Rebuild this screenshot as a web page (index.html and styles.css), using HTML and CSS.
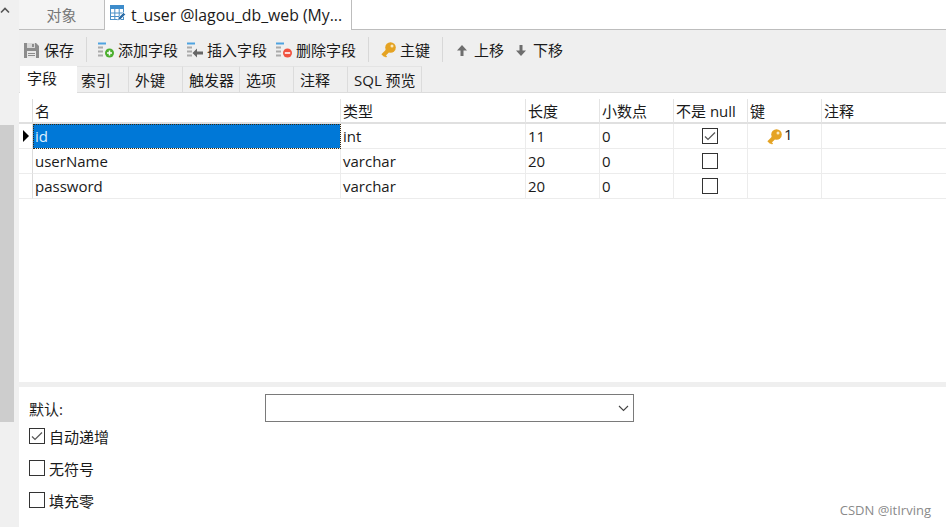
FILE: index.html
```html
<!DOCTYPE html>
<html lang="zh">
<head>
<meta charset="utf-8">
<title>t_user</title>
<link rel="stylesheet" href="styles.css">
</head>
<body>
<div class="app">
  <aside class="side">
    <svg class="chev" width="10" height="7" viewBox="0 0 10 7"><path d="M1 5.500 5 1.500 9 5.500" fill="none" stroke="#555" stroke-width="1.6"/></svg>
    <div class="thumb"></div>
  </aside>
  <main class="main">
    <nav class="tabbar">
      <div class="tab tab-idle">对象</div>
      <div class="tab tab-active">
        <svg class="tab-icon" width="16" height="17" viewBox="0 0 16 17">
          <rect x="0.5" y="0.5" width="13" height="14" fill="#fff" stroke="#4a90c8"/>
          <rect x="0" y="0" width="14" height="4" fill="#3d8ccb"/>
          <path d="M0.5 8h13M0.5 11.500h13M4.800 4v11M9.200 4v11" stroke="#4a90c8" fill="none"/>
          <path d="M7.500 15.500l1-3 5-5 2 2-5 5z" fill="#2f6fa8" stroke="#fff" stroke-width=".6"/>
        </svg>
        <span>t_user @lagou_db_web (My...</span>
      </div>
      <div class="tab-rest"></div>
    </nav>

    <div class="toolbar">
      <div class="tool tool-save">
        <svg width="15" height="15" viewBox="0 0 15 15"><path d="M0 0h12l3 3v12H0z" fill="#8c8c8c"/><rect x="3" y="0" width="8" height="5" fill="#d8d8d8"/><rect x="8" y="1" width="2" height="3" fill="#8c8c8c"/><rect x="3" y="8" width="9" height="7" fill="#e8e8e8"/><path d="M4 10.500h7M4 12.500h7" stroke="#8c8c8c"/></svg>
        <span>保存</span>
      </div>
      <i class="sep sep-a"></i>
      <div class="tool tool-add">
        <svg width="16" height="16" viewBox="0 0 16 16"><path d="M0 1.500h8" stroke="#4ea3e0" stroke-width="2"/><path d="M0 5.500h5M0 9.500h5M0 13.500h5" stroke="#aaa" stroke-width="2"/><circle cx="11.500" cy="11" r="4.500" fill="#4caf2f"/><path d="M9 11h5M11.500 8.500v5" stroke="#fff" stroke-width="1.500"/></svg>
        <span>添加字段</span>
      </div>
      <div class="tool tool-ins">
        <svg width="16" height="16" viewBox="0 0 16 16"><path d="M0 1.500h8" stroke="#4ea3e0" stroke-width="2"/><path d="M0 5.500h5M0 9.500h5M0 13.500h5" stroke="#aaa" stroke-width="2"/><path d="M16 9.500h-6v-3l-4.500 4.500 4.500 4.500v-3h6z" fill="#666"/></svg>
        <span>插入字段</span>
      </div>
      <div class="tool tool-del">
        <svg width="16" height="16" viewBox="0 0 16 16"><path d="M0 1.500h8" stroke="#4ea3e0" stroke-width="2"/><path d="M0 5.500h5M0 9.500h5M0 13.500h5" stroke="#aaa" stroke-width="2"/><circle cx="11.500" cy="11" r="4.500" fill="#f0523f"/><path d="M8.800 11h5.400" stroke="#fff" stroke-width="1.600"/></svg>
        <span>删除字段</span>
      </div>
      <i class="sep sep-b"></i>
      <div class="tool tool-key">
        <svg width="15" height="16" viewBox="0 0 15 16"><path d="M6.500 9 1.800 13.700" stroke="#e5a323" stroke-width="4" fill="none"/><path d="M3.500 13l2 2" stroke="#e5a323" stroke-width="1.600"/><circle cx="9.500" cy="5.500" r="5.300" fill="#e5a323"/><circle cx="11" cy="4" r="1.500" fill="#fbe9bd"/></svg>
        <span>主键</span>
      </div>
      <i class="sep sep-c"></i>
      <div class="tool tool-up">
        <svg width="10" height="11" viewBox="0 0 10 11"><path d="M5 0 10 5.500H6.500V11h-3V5.500H0z" fill="#6e6e6e"/></svg>
        <span>上移</span>
      </div>
      <div class="tool tool-down">
        <svg width="10" height="11" viewBox="0 0 10 11"><path d="M5 11 10 5.500H6.500V0h-3V5.500H0z" fill="#6e6e6e"/></svg>
        <span>下移</span>
      </div>
    </div>

    <div class="subtabs">
      <div class="sub sub-on s1">字段</div>
      <div class="sub s2">索引</div>
      <div class="sub s3">外键</div>
      <div class="sub s4">触发器</div>
      <div class="sub s5">选项</div>
      <div class="sub s6">注释</div>
      <div class="sub s7">SQL 预览</div>
    </div>

    <section class="grid-area">
      <div class="grid">
        <div class="c head mark"></div>
        <div class="c head">名</div>
        <div class="c head">类型</div>
        <div class="c head">长度</div>
        <div class="c head">小数点</div>
        <div class="c head">不是 null</div>
        <div class="c head">键</div>
        <div class="c head">注释</div>

        <div class="c mark"><span class="arrow"></span></div>
        <div class="c selected">id</div>
        <div class="c">int</div>
        <div class="c">11</div>
        <div class="c">0</div>
        <div class="c center"><span class="check checked"><svg width="12" height="10" viewBox="0 0 12 10"><path d="M1 5.500 4 8.500 11 1.500" fill="none" stroke="#555" stroke-width="1.200"/></svg></span></div>
        <div class="c keycell">
          <svg width="15" height="16" viewBox="0 0 15 16"><path d="M6.500 9 1.800 13.700" stroke="#e5a323" stroke-width="4" fill="none"/><path d="M3.500 13l2 2" stroke="#e5a323" stroke-width="1.600"/><circle cx="9.500" cy="5.500" r="5.300" fill="#e5a323"/><circle cx="11" cy="4" r="1.500" fill="#fbe9bd"/></svg>
          <span class="keynum">1</span>
        </div>
        <div class="c"></div>

        <div class="c mark"></div>
        <div class="c">userName</div>
        <div class="c">varchar</div>
        <div class="c">20</div>
        <div class="c">0</div>
        <div class="c center"><span class="check"></span></div>
        <div class="c"></div>
        <div class="c"></div>

        <div class="c mark"></div>
        <div class="c">password</div>
        <div class="c">varchar</div>
        <div class="c">20</div>
        <div class="c">0</div>
        <div class="c center"><span class="check"></span></div>
        <div class="c"></div>
        <div class="c"></div>
      </div>
    </section>

    <section class="props">
      <div class="default-row">
        <label class="default-label">默认:</label>
        <div class="select"><svg width="11" height="7" viewBox="0 0 11 7"><path d="M1 1 5.500 5.500 10 1" fill="none" stroke="#444" stroke-width="1.100"/></svg></div>
      </div>
      <div class="opt"><span class="check checked"><svg width="12" height="10" viewBox="0 0 12 10"><path d="M1 5.500 4 8.500 11 1.500" fill="none" stroke="#555" stroke-width="1.200"/></svg></span>自动递增</div>
      <div class="opt"><span class="check"></span>无符号</div>
      <div class="opt"><span class="check"></span>填充零</div>
    </section>
  </main>
  <div class="watermark">CSDN @itIrving</div>
</div>
</body>
</html>
```
FILE: styles.css
```css
* { box-sizing: border-box; }
html, body { margin: 0; padding: 0; height: 100%; background: #fff; }
body {
  font-family: "Open Sans", "Noto Sans CJK SC", sans-serif;
  font-size: 15px;
  color: #1a1a1a;
  overflow: hidden;
}
.app { position: relative; display: flex; width: 946px; height: 527px; }

.side { position: relative; width: 19px; flex: none; background: #f0f0f0; }
.chev { position: absolute; left: 0; top: 7px; }
.thumb { position: absolute; left: 0; top: 125px; width: 14px; height: 297px; background: #cdcdcd; }

.main { flex: 1; display: flex; flex-direction: column; min-width: 0; }

.tabbar { display: flex; height: 30px; flex: none; }
.tab { height: 30px; display: flex; align-items: center; }
.tab-idle {
  width: 86px;
  justify-content: center;
  background: #f4f4f4;
  color: #777;
  border-right: 1px solid #bdbdbd;
  border-bottom: 1px solid #bdbdbd;
}
.tab-active { width: 247px; background: #fff; border-right: 1px solid #bdbdbd; padding-left: 5px; gap: 5px; font-size: 15.800px; }
.tab-icon { flex: none; margin-top: -4px; }
.tab-rest { flex: 1; border-bottom: 1px solid #bdbdbd; }

.toolbar { display: flex; align-items: center; height: 36px; flex: none; background: #efefef; padding-left: 5px; }
.tool { display: flex; align-items: center; gap: 4px; height: 30px; flex: none; margin-top: 4px; }
.tool svg { flex: none; }
.tool span { line-height: 20px; }
.tool-save { gap: 5px; }
.sep { display: block; width: 1px; height: 25px; background: #d8d8d8; flex: none; margin-top: 3px; }
.sep-a { margin-left: 12px; margin-right: 11px; }
.tool-ins { margin-left: 9px; }
.tool-del { margin-left: 9px; }
.sep-b { margin-left: 12px; margin-right: 12px; }
.tool-key { gap: 4px; }
.sep-c { margin-left: 12px; margin-right: 14px; }
.tool-up { gap: 7px; }
.tool-down { gap: 7px; margin-left: 12px; }

.subtabs { display: flex; height: 27px; flex: none; background: #efefef; border-bottom: 1px solid #dcdcdc; padding-left: 1px; align-items: flex-end; }
.sub { height: 26px; display: flex; align-items: center; padding-left: 4px; border-right: 1px solid #dcdcdc; border-top: 1px solid #e4e4e4; flex: none; }
.sub-on { background: #fff; border: none; height: 27px; margin-bottom: -1px; position: relative; padding: 0 0 4px 7px; }
.s1 { width: 57px; } .s2 { width: 52px; } .s3 { width: 54px; } .s4 { width: 57px; }
.s5 { width: 54px; padding-left: 6px; } .s6 { width: 54px; padding-left: 6px; } .s7 { width: 74px; padding-left: 6px; }
.s3 { padding-left: 6px; } .s4 { padding-left: 6px; }

.grid-area { height: 289px; flex: none; background: #fff; padding-top: 6px; }
.grid {
  display: grid;
  grid-template-columns: 14px 308px 185px 74px 74px 74px 74px 1fr;
  grid-auto-rows: 25px;
}
.c { display: flex; align-items: center; padding: 0 2px; border-right: 1px solid #ececec; border-bottom: 1px solid #ececec; white-space: nowrap; color: #1a1a1a; }
.c:nth-child(8n) { border-right: none; }
.head { background: #fff; border-bottom: 2px solid #e0e0e0; border-right-color: #e4e4e4; }
.mark { position: relative; padding: 0; border-right: 1px solid #dcdcdc; }
.arrow { position: absolute; left: 4px; top: 6px; width: 0; height: 0; border-left: 6px solid #000; border-top: 6px solid transparent; border-bottom: 6px solid transparent; }
.selected { background: #0078d7; color: #dff0ff; outline: 1px dotted #3a2a10; outline-offset: -1px; }
.center { justify-content: center; padding: 0 4px 0 2px; }
.check { display: inline-flex; align-items: center; justify-content: center; width: 16px; height: 16px; border: 1px solid #333; background: #fff; flex: none; }
.keycell { padding-left: 19px; gap: 3px; align-items: flex-start; padding-top: 3px; }
.keycell svg { margin-top: 2px; }
.keynum { line-height: 14px; color: #1a1a1a; margin-left: -1px; }

.props { flex: 1; border-top: 5px solid #efefef; padding: 7px 0 0 10px; background: #fff; }
.default-row { display: flex; align-items: center; height: 28px; }
.default-label { width: 236px; flex: none; }
.select { width: 369px; height: 28px; border: 1px solid #7a7a7a; display: flex; align-items: center; justify-content: flex-end; padding-right: 4px; background: #fff; }
.opt { display: flex; align-items: center; gap: 4px; height: 16px; margin-bottom: 16px; }
.default-row + .opt { margin-top: 6px; }

.watermark { position: absolute; right: 15px; bottom: 8px; font-family: "Open Sans", sans-serif; font-size: 13px; color: #8a8a8a; }
```
